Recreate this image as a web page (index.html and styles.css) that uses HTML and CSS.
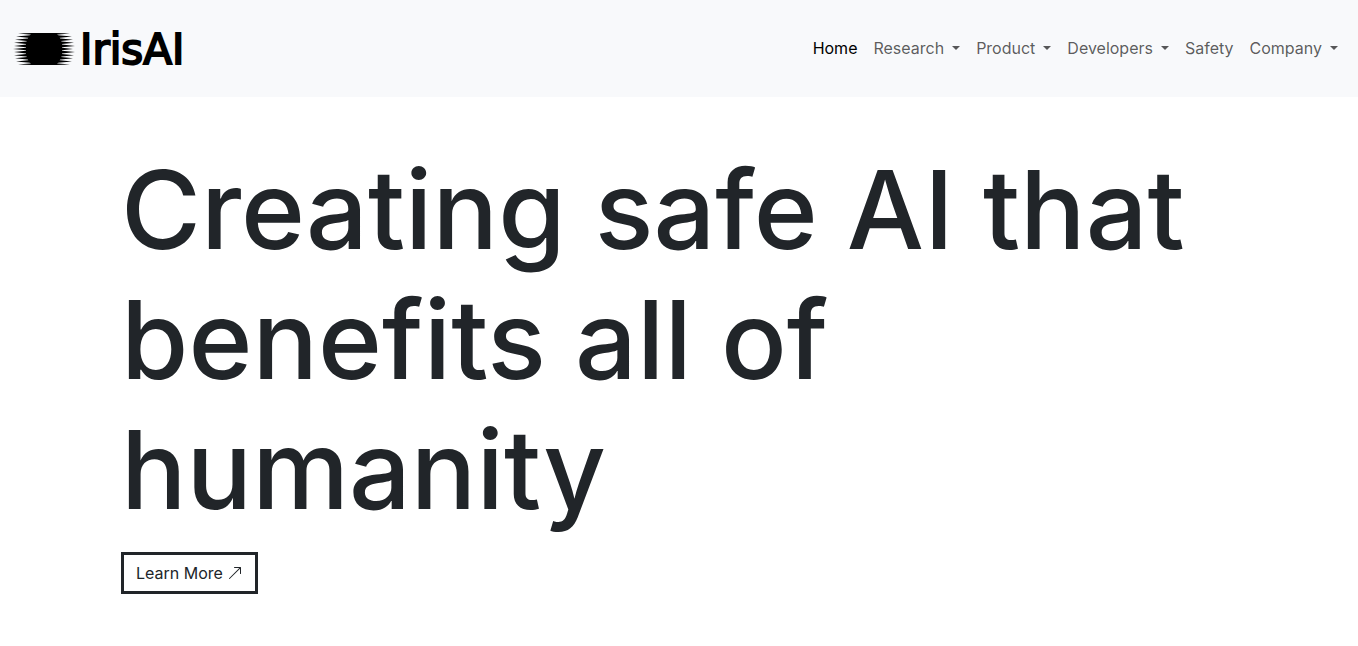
FILE: index.html
```
<!DOCTYPE html>
<html lang="en">
<head>
<meta charset="utf-8">
<title>IrisAI</title>
<link rel="stylesheet" href="styles.css">
</head>
<body>
<header class="navbar">
  <a class="brand" href="#">
    <svg class="brand-mark" viewBox="0 0 64 34" aria-hidden="true">
      <path d="M20 1H44Q49 6 50 12V22Q49 28 44 33H20Q15 28 14 22V12Q15 6 20 1Z"/>
      <path d="M6 1.500L20 1H44L58 1.500L44 2.800H20ZM4 4.600L18 3.200H46L60 4.600L46 6H18ZM3 7.700L15 6.400H49L61 7.700L49 9H15ZM2 10.800L14 9.500H50L62 10.800L50 12.100H14ZM2 13.900L14 12.600H50L63 13.900L50 15.200H14ZM1 17L14 15.700H50L61 17L50 18.300H14ZM2 20.100L14 18.800H50L63 20.100L50 21.400H14ZM2 23.200L14 21.900H50L62 23.200L50 24.500H14ZM3 26.300L15 25H49L61 26.300L49 27.600H15ZM4 29.400L18 28H46L60 29.400L46 30.800H18ZM6 32.500L20 31.200H44L58 32.500L44 33H20Z"/>
    </svg>
    <span class="brand-name">IrisAI</span>
  </a>
  <nav class="menu">
    <a class="menu-link active" href="#">Home</a>
    <a class="menu-link dropdown" href="#">Research</a>
    <a class="menu-link dropdown" href="#">Product</a>
    <a class="menu-link dropdown" href="#">Developers</a>
    <a class="menu-link" href="#">Safety</a>
    <a class="menu-link dropdown" href="#">Company</a>
  </nav>
</header>
<main class="hero">
  <h1 class="hero-title">Creating safe AI that benefits all of humanity</h1>
  <a class="button" href="#">Learn More
    <svg class="arrow" viewBox="0 0 16 16" aria-hidden="true"><path fill-rule="evenodd" d="M14 2.500a.5.5 0 0 0-.5-.5h-6a.5.5 0 0 0 0 1h4.793L2.146 13.146a.5.5 0 0 0 .708.708L13 3.707V8.500a.5.5 0 0 0 1 0v-6z"/></svg>
  </a>
</main>
</body>
</html>
```
FILE: styles.css
```
* { box-sizing: border-box; }
body {
  margin: 0;
  background: #fff;
  color: #212529;
  font: 16px/24px Inter, sans-serif;
}
a { color: inherit; text-decoration: none; }
.navbar {
  display: flex;
  align-items: center;
  justify-content: space-between;
  padding: 24px 12px;
  background: #f8f9fb;
}
.brand {
  display: flex;
  align-items: center;
  gap: 4px;
  color: #000;
}
.brand-mark { width: 64px; height: 34px; }
.brand-name {
  padding-top: 2px;
  font: 42px/47px "DejaVu Sans", sans-serif;
  -webkit-text-stroke: 2px #000;
}
.menu {
  display: flex;
  padding-bottom: 2px;
}
.menu-link {
  padding: 8px;
  color: rgba(0, 0, 0, 0.65);
}
.menu-link.active { color: #000; }
.dropdown::after {
  content: "";
  display: inline-block;
  margin-left: 8px;
  vertical-align: 4px;
  border: 4px solid transparent;
  border-top-color: currentColor;
  border-bottom: 0;
}
.hero { padding: 47px 121px; }
.hero-title {
  margin: 0;
  font-size: 109px;
  font-weight: 500;
  line-height: 130px;
}
.button {
  display: inline-block;
  margin-top: 18px;
  padding: 6px 12px;
  border: 3px solid #212529;
}
.arrow {
  width: 16px;
  height: 16px;
  vertical-align: -2px;
  fill: currentColor;
}
```
